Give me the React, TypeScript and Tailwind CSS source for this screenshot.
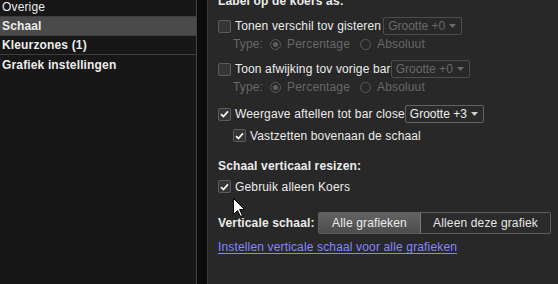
import React from "react";

const font = { fontFamily: '"Liberation Sans", Arial, sans-serif' };

function Check({ checked }: { checked?: boolean }) {
  return (
    <div className="w-[13px] h-[13px] rounded-[2px] border border-[#5c5c5c] bg-[#363636] flex items-center justify-center shrink-0">
      {checked && (
        <svg width="9" height="8" viewBox="0 0 9 8">
          <path d="M1 4.2 L3.4 6.5 L8 1.3" fill="none" stroke="#f2f2f2" strokeWidth="1.8" />
        </svg>
      )}
    </div>
  );
}

function Radio({ on }: { on?: boolean }) {
  return (
    <div className="w-[11px] h-[11px] rounded-full border border-[#5a5a5a] flex items-center justify-center shrink-0">
      {on && <div className="w-[5px] h-[5px] rounded-full bg-[#5e5e5e]" />}
    </div>
  );
}

function Select({ label, enabled }: { label: string; enabled?: boolean }) {
  return (
    <div
      className={
        "h-[18px] w-[79px] rounded-[2px] border flex items-center pl-[4px] pr-[5px] justify-between tracking-normal " +
        (enabled ? "border-[#626262] bg-[#2a2a2a] text-[#f0f0f0]" : "border-[#4c4c4c] text-[#6a6a6a]")
      }
    >
      <span>{label}</span>
      <svg width="7" height="4" viewBox="0 0 7 4">
        <path d="M0 0 L7 0 L3.5 4 Z" fill={enabled ? "#d0d0d0" : "#6a6a6a"} />
      </svg>
    </div>
  );
}

function TypeRow() {
  return (
    <div className="h-[15px] flex items-center pl-[15px] text-[#676767] leading-[15px]">
      <span>Type:</span>
      <div className="ml-[7px]"><Radio on /></div>
      <span className="ml-[6px]">Percentage</span>
      <div className="ml-[10px]"><Radio /></div>
      <span className="ml-[6px]">Absoluut</span>
    </div>
  );
}

export default function App() {
  return (
    <div className="w-[558px] h-[284px] overflow-hidden flex text-[12px] tracking-[0.15px] text-[#ececec] bg-[#282828]" style={font}>
      {/* Sidebar */}
      <div className="w-[196px] h-full bg-[#171717] flex flex-col">
        {[
          { t: "Overige", b: false, sel: false, first: true },
          { t: "Schaal", b: true, sel: true },
          { t: "Kleurzones (1)", b: true, sel: false },
          { t: "Grafiek instellingen", b: true, sel: false, last: true },
        ].map((r) => (
          <div
            key={r.t}
            className={
              "pl-[2px] flex items-center " +
              (r.first ? "h-[17px] pb-[2px] " : "h-[19px] ") +
              (r.last ? "" : "border-b border-[#3e3e3e] ") +
              (r.sel ? "bg-[#4a4a4a] " : "") +
              (r.b ? "font-bold" : "")
            }
          >
            {r.t}
          </div>
        ))}
      </div>
      <div className="w-px h-full bg-[#454545]" />
      <div className="w-[10px] h-full bg-[#0b0b0b]" />
      <div className="w-px h-full bg-[#3a3a3a]" />

      {/* Content */}
      <div className="relative flex-1 h-full pl-[10px] flex flex-col -mt-[7px]">
        <div className="h-[16px] leading-[16px] font-bold">Label op de koers as:</div>
        <div className="h-[6px]" />
        <div className="h-[22px] flex items-center">
          <Check />
          <span className="ml-[4px]">Tonen verschil tov gisteren</span>
          <div className="ml-[2px]"><Select label="Grootte +0" /></div>
        </div>
        <TypeRow />
        <div className="h-[6px]" />
        <div className="h-[22px] flex items-center">
          <Check />
          <span className="ml-[4px]">Toon afwijking tov vorige bar</span>
          <div className="ml-[0px]"><Select label="Grootte +0" /></div>
        </div>
        <TypeRow />
        <div className="h-[8px]" />
        <div className="h-[22px] flex items-center">
          <Check checked />
          <span className="ml-[4px]">Weergave aftellen tot bar close</span>
          <div className="ml-[0px]"><Select label="Grootte +3" enabled /></div>
        </div>
        <div className="h-[21px] flex items-center pl-[15px]">
          <Check checked />
          <span className="ml-[4px]">Vastzetten bovenaan de schaal</span>
        </div>
        <div className="h-[12px]" />
        <div className="h-[16px] leading-[16px] font-bold">Schaal verticaal resizen:</div>
        <div className="h-[2px]" />
        <div className="h-[21px] flex items-center">
          <Check checked />
          <span className="ml-[4px]">Gebruik alleen Koers</span>
        </div>
        <div className="h-[15px]" />
        <div className="h-[22px] flex items-center">
          <span className="font-bold w-[100px]">Verticale schaal:</span>
          <div className="flex h-[22px] rounded-[2px] border border-[#5e5e5e] overflow-hidden">
            <div className="w-[102px] flex items-center justify-center bg-gradient-to-b from-[#646464] to-[#4c4c4c] border-r border-[#7a7a7a]">
              Alle grafieken
            </div>
            <div className="w-[129px] flex items-center justify-center bg-[#2b2b2b] text-[#e6e6e6]">
              Alleen deze grafiek
            </div>
          </div>
        </div>
        <div className="h-[5px]" />
        <div className="h-[16px] leading-[16px]">
          <span className="text-[#8686ff] underline underline-offset-[2px]">Instellen verticale schaal voor alle grafieken</span>
        </div>

        {/* mouse cursor */}
        <svg className="absolute left-[25px] top-[205px]" width="13" height="20" viewBox="0 0 13 20">
          <path d="M0.5 0.5 L0.5 16.5 L4.5 12.5 L7.5 18.5 L9.5 17.5 L6.5 11.5 L11.5 11.5 Z" fill="#ffffff" stroke="#000000" strokeWidth="1" />
        </svg>
      </div>
    </div>
  );
}
